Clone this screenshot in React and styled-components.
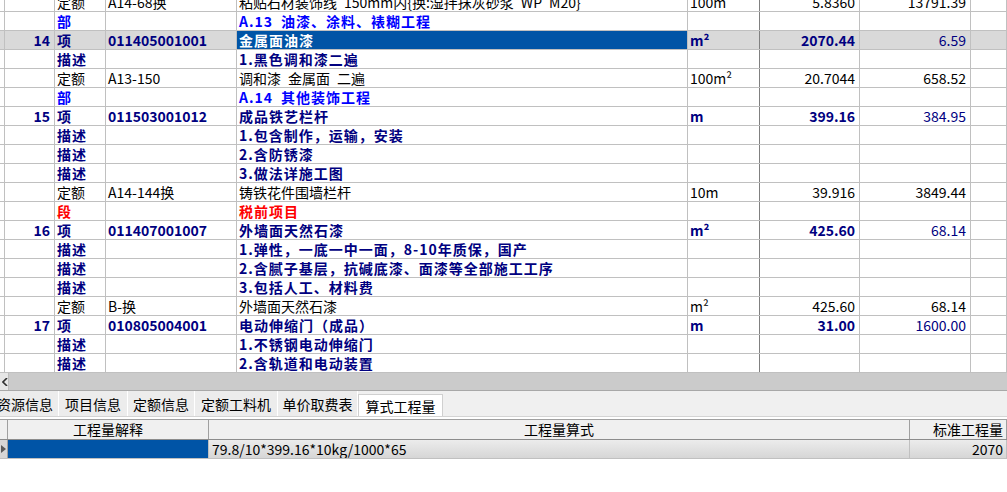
import React from "react";
import styled, { createGlobalStyle } from "styled-components";

const GlobalStyle = createGlobalStyle`
  html, body {
    margin: 0;
    padding: 0;
    background: #ffffff;
  }
  body {
    font-family: "Noto Sans CJK SC", "Noto Sans", sans-serif;
    font-size: 14px;
    color: #000;
  }
`;

const COLS = "3px 52px 51px 131px 451px 72px 100px 111px 1fr";

const tone = {
  quota: "#000000",
  section: "#0000ff",
  item: "#000080",
  desc: "#000080",
  segment: "#ff0000",
};

const rows = [
  { kind: "quota", type: "定额", code: "A14-68换", name: "粘贴石材装饰线 150mm内{换:湿拌抹灰砂浆 WP M20}", unit: "100m", qty: "5.8360", price: "13791.39" },
  { kind: "section", type: "部", name: "A.13 油漆、涂料、裱糊工程" },
  { kind: "item", no: "14", type: "项", code: "011405001001", name: "金属面油漆", unit: "m²", qty: "2070.44", price: "6.59", selected: true },
  { kind: "desc", type: "描述", name: "1.黑色调和漆二遍" },
  { kind: "quota", type: "定额", code: "A13-150", name: "调和漆 金属面 二遍", unit: "100m²", qty: "20.7044", price: "658.52" },
  { kind: "section", type: "部", name: "A.14 其他装饰工程" },
  { kind: "item", no: "15", type: "项", code: "011503001012", name: "成品铁艺栏杆", unit: "m", qty: "399.16", price: "384.95" },
  { kind: "desc", type: "描述", name: "1.包含制作，运输，安装" },
  { kind: "desc", type: "描述", name: "2.含防锈漆" },
  { kind: "desc", type: "描述", name: "3.做法详施工图" },
  { kind: "quota", type: "定额", code: "A14-144换", name: "铸铁花件围墙栏杆", unit: "10m", qty: "39.916", price: "3849.44" },
  { kind: "segment", type: "段", name: "税前项目" },
  { kind: "item", no: "16", type: "项", code: "011407001007", name: "外墙面天然石漆", unit: "m²", qty: "425.60", price: "68.14" },
  { kind: "desc", type: "描述", name: "1.弹性，一底一中一面，8-10年质保，国产" },
  { kind: "desc", type: "描述", name: "2.含腻子基层，抗碱底漆、面漆等全部施工工序" },
  { kind: "desc", type: "描述", name: "3.包括人工、材料费" },
  { kind: "quota", type: "定额", code: "B-换", name: "外墙面天然石漆", unit: "m²", qty: "425.60", price: "68.14" },
  { kind: "item", no: "17", type: "项", code: "010805004001", name: "电动伸缩门（成品）", unit: "m", qty: "31.00", price: "1600.00" },
  { kind: "desc", type: "描述", name: "1.不锈钢电动伸缩门" },
  { kind: "desc", type: "描述", name: "2.含轨道和电动装置" },
];

const tabs = [
  { label: "资源信息", width: 67, first: true },
  { label: "项目信息", width: 69 },
  { label: "定额信息", width: 67 },
  { label: "定额工料机", width: 83 },
  { label: "单价取费表", width: 80 },
  { label: "算式工程量", width: 85, active: true },
];

const wide = (s) => (s ? s.replace(/ /g, "\u2002") : s);

const App = () => {
  return (
    <Page>
      <GlobalStyle />
      <Viewport>
        <Sheet>
          {rows.map((r, i) => {
            const color = tone[r.kind];
            const bold = r.kind !== "quota";
            return (
              <Row key={i} $selected={r.selected}>
                <Cell />
                <Cell $align="right" $padR={4} $bold $color={color}>
                  {r.no}
                </Cell>
                <Cell $bold={bold} $spaced={bold} $color={color}>
                  {r.type}
                </Cell>
                <Cell $bold={bold} $color={color}>
                  {r.code}
                </Cell>
                <Cell
                  $bold={bold}
                  $spaced={bold}
                  $color={r.selected ? "#ffffff" : color}
                  $bg={r.selected ? "#0054a6" : undefined}
                >
                  {wide(r.name)}
                </Cell>
                <Cell $bold={bold} $color={color} $dark>
                  {r.unit}
                </Cell>
                <Cell $align="right" $padR={4} $bold={bold} $color={color}>
                  {r.qty}
                </Cell>
                <Cell $align="right" $padR={4} $color={color}>
                  {r.price}
                </Cell>
                <Cell />
              </Row>
            );
          })}
        </Sheet>
      </Viewport>

      <ScrollBar>
        <ScrollArrow>
          <svg width="6" height="8" viewBox="0 0 6 8">
            <path d="M5 0 L1 4 L5 8" fill="none" stroke="#303030" strokeWidth="1.6" />
          </svg>
        </ScrollArrow>
        <ScrollTrack />
      </ScrollBar>

      <TabStrip>
        {tabs.map((t) => (
          <Tab key={t.label} $width={t.width} $active={t.active} $first={t.first}>
            {t.label}
          </Tab>
        ))}
      </TabStrip>
      <Gap />

      <Detail>
        <DetailHead>
          <HeadCell />
          <HeadCell>工程量解释</HeadCell>
          <HeadCell>工程量算式</HeadCell>
          <HeadCell $align="right">标准工程量</HeadCell>
        </DetailHead>
        <DetailRow>
          <Indicator>
            <svg width="5" height="8" viewBox="0 0 5 8">
              <path d="M0 0 L5 4 L0 8 Z" fill="#5a5a5a" />
            </svg>
          </Indicator>
          <DataCell $bg="#0054a6" />
          <DataCell>79.8/10*399.16*10kg/1000*65</DataCell>
          <DataCell $align="right">2070</DataCell>
        </DetailRow>
      </Detail>
    </Page>
  );
};

export default App;

const Page = styled.div`
  width: 1007px;
  height: 492px;
  overflow: hidden;
  background: #ffffff;
`;

const Viewport = styled.div`
  height: 373px;
  overflow: hidden;
`;

const Sheet = styled.div`
  margin-top: -7px;
`;

const Row = styled.div`
  display: grid;
  grid-template-columns: ${COLS};
  height: 19px;
  box-sizing: border-box;
  border-bottom: 1px solid #c0c0c0;
  background: ${(p) => (p.$selected ? "#d9d9d9" : "#ffffff")};
`;

const Cell = styled.div`
  box-sizing: border-box;
  height: 18px;
  line-height: 18px;
  padding: 0 ${(p) => p.$padR ?? 2}px 0 2px;
  border-right: 1px solid ${(p) => (p.$dark ? "#808080" : "#c0c0c0")};
  white-space: nowrap;
  overflow: hidden;
  text-align: ${(p) => p.$align || "left"};
  color: ${(p) => p.$color || "#000"};
  font-weight: ${(p) => (p.$bold ? 700 : 400)};
  letter-spacing: ${(p) => (p.$spaced ? "1px" : "0")};
  background: ${(p) => p.$bg || "transparent"};
`;

const ScrollBar = styled.div`
  display: flex;
  height: 17px;
`;

const ScrollArrow = styled.div`
  width: 8px;
  display: flex;
  align-items: center;
  justify-content: flex-end;
  overflow: hidden;
  background: #e6e6e6;
  border-right: 1px solid #bdbdbd;
`;

const ScrollTrack = styled.div`
  flex: 1;
  background: #cbcbcb;
`;

const TabStrip = styled.div`
  display: flex;
  height: 27px;
  box-sizing: border-box;
  border-top: 1px solid #a8a8a8;
  border-bottom: 1px solid #d4d4d4;
  background: #f0f0f0;
  overflow: hidden;
`;

const Tab = styled.div`
  flex: none;
  width: ${(p) => p.$width}px;
  margin-left: ${(p) => (p.$first ? "-8px" : "0")};
  box-sizing: border-box;
  display: flex;
  align-items: center;
  justify-content: center;
  white-space: nowrap;
  font-size: 14px;
  color: #000;
  margin-top: ${(p) => (p.$active ? "3px" : "0")};
  background: ${(p) => (p.$active ? "#ffffff" : "#ececec")};
  border-right: 1px solid ${(p) => (p.$active ? "#d0d0d0" : "#ffffff")};
  border-top: ${(p) => (p.$active ? "1px solid #d0d0d0" : "none")};
  border-left: ${(p) => (p.$active ? "1px solid #d0d0d0" : "none")};
`;

const Gap = styled.div`
  height: 2px;
  background: #ffffff;
`;

const Detail = styled.div`
  border-top: 1px solid #a0a0a0;
`;

const DetailHead = styled.div`
  display: grid;
  grid-template-columns: 8px 201px 701px 1fr;
  height: 20px;
  box-sizing: border-box;
  border-bottom: 1px solid #8c8c8c;
  background: #f0f0f0;
`;

const HeadCell = styled.div`
  box-sizing: border-box;
  line-height: 19px;
  padding: 0 3px;
  border-right: 1px solid #a0a0a0;
  text-align: ${(p) => p.$align || "center"};
  white-space: nowrap;
  overflow: hidden;
`;

const DetailRow = styled.div`
  display: grid;
  grid-template-columns: 8px 201px 701px 1fr;
  height: 19px;
  box-sizing: border-box;
  border-bottom: 1px solid #c0c0c0;
`;

const Indicator = styled.div`
  display: flex;
  align-items: center;
  padding-left: 1px;
  background: #d6d6d6;
  border-right: 1px solid #a0a0a0;
`;

const DataCell = styled.div`
  box-sizing: border-box;
  line-height: 18px;
  padding: 0 3px;
  border-right: 1px solid #c0c0c0;
  text-align: ${(p) => p.$align || "left"};
  white-space: nowrap;
  overflow: hidden;
  background: ${(p) => p.$bg || "linear-gradient(#ececec, #d6d6d6)"};
`;
